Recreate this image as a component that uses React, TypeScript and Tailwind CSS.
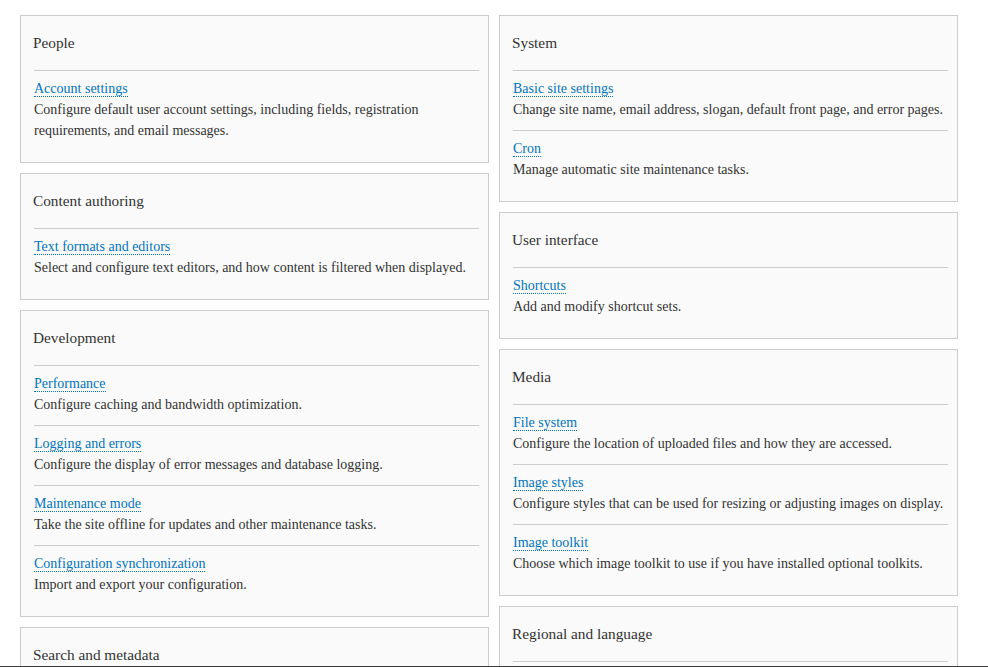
import React from 'react';

type Item = { title: string; desc: string };
type Block = { title: string; items: Item[] };

const left: Block[] = [
  {
    title: 'People',
    items: [
      {
        title: 'Account settings',
        desc: 'Configure default user account settings, including fields, registration requirements, and email messages.',
      },
    ],
  },
  {
    title: 'Content authoring',
    items: [
      { title: 'Text formats and editors', desc: 'Select and configure text editors, and how content is filtered when displayed.' },
    ],
  },
  {
    title: 'Development',
    items: [
      { title: 'Performance', desc: 'Configure caching and bandwidth optimization.' },
      { title: 'Logging and errors', desc: 'Configure the display of error messages and database logging.' },
      { title: 'Maintenance mode', desc: 'Take the site offline for updates and other maintenance tasks.' },
      { title: 'Configuration synchronization', desc: 'Import and export your configuration.' },
    ],
  },
  {
    title: 'Search and metadata',
    items: [
      { title: 'Search pages', desc: 'Configure search pages and search indexing options.' },
      { title: 'URL aliases', desc: 'Add custom URLs to existing paths.' },
    ],
  },
];

const right: Block[] = [
  {
    title: 'System',
    items: [
      { title: 'Basic site settings', desc: 'Change site name, email address, slogan, default front page, and error pages.' },
      { title: 'Cron', desc: 'Manage automatic site maintenance tasks.' },
    ],
  },
  {
    title: 'User interface',
    items: [{ title: 'Shortcuts', desc: 'Add and modify shortcut sets.' }],
  },
  {
    title: 'Media',
    items: [
      { title: 'File system', desc: 'Configure the location of uploaded files and how they are accessed.' },
      { title: 'Image styles', desc: 'Configure styles that can be used for resizing or adjusting images on display.' },
      { title: 'Image toolkit', desc: 'Choose which image toolkit to use if you have installed optional toolkits.' },
    ],
  },
  {
    title: 'Regional and language',
    items: [
      { title: 'Regional settings', desc: 'Settings for the site\u2019s default time zone and country.' },
      { title: 'Date and time formats', desc: 'Configure display format strings for date and time.' },
    ],
  },
];

function Panel({ block }: { block: Block }) {
  return (
    <div className="border border-[#cccccc] bg-[#fafafa] pl-[13px] pr-[9px] pb-[11px]">
      <h3 className="flex h-[55px] items-center border-b border-[#cccccc] text-[15.3px] font-normal leading-[22px] text-[#333]">
        <span className="-ml-px">{block.title}</span>
      </h3>
      {block.items.map((item, i) => (
        <div
          key={item.title}
          className={i ? 'border-t border-[#cccccc] pt-[7px] pb-[10px] leading-[21px]' : 'pt-[7px] pb-[10px] leading-[21px]'}
        >
          <div>
            <a href="#" className="text-[#0074bd] border-b border-dotted border-[#0074bd]">
              {item.title}
            </a>
          </div>
          <div className="text-[#333]">{item.desc}</div>
        </div>
      ))}
    </div>
  );
}

export default function App() {
  return (
    <div className="min-h-screen bg-white text-[14px] leading-[21px] text-[#333]" style={{ fontFamily: '"Liberation Serif", serif' }}>
      <div className="flex gap-[10px] pt-[15px] pl-[20px]">
        <div className="flex w-[469px] flex-col gap-[10px]">
          {left.map((b) => <Panel key={b.title} block={b} />)}
        </div>
        <div className="flex w-[459px] flex-col gap-[10px]">
          {right.map((b) => <Panel key={b.title} block={b} />)}
        </div>
      </div>
      <div className="fixed bottom-0 left-0 h-px w-full bg-[#3c3c3c]" />
    </div>
  );
}
